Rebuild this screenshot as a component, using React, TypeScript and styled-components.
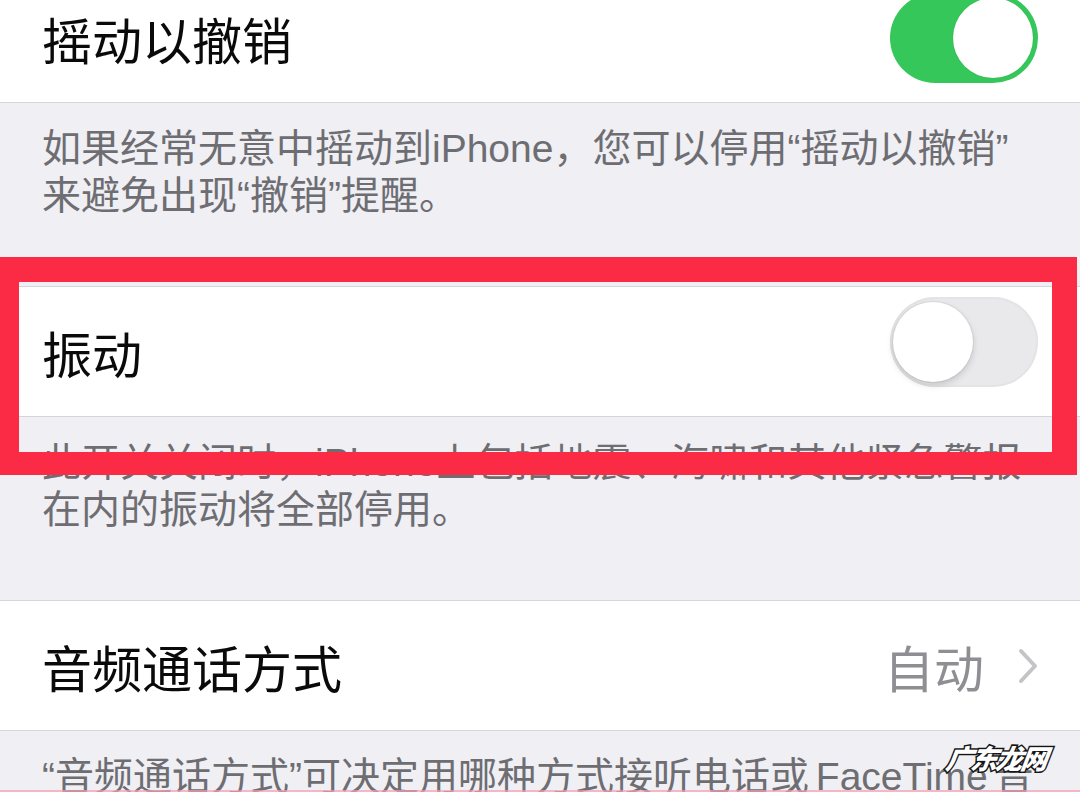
import React from "react";
import styled, { createGlobalStyle } from "styled-components";

const GlobalStyle = createGlobalStyle`
  html, body {
    margin: 0;
    padding: 0;
    background: #efeff4;
  }
  * { box-sizing: border-box; }
`;

const Page = styled.div`
  position: relative;
  width: 1080px;
  height: 792px;
  overflow: hidden;
  background: #efeff4;
  font-family: "Noto Sans CJK SC", sans-serif;
`;

const Group = styled.div<{ $first?: boolean }>`
  background: #ffffff;
  border-top: 1px solid #d6d6da;
  border-bottom: 1px solid #d6d6da;
  margin-top: ${(p) => (p.$first ? "-28px" : "0")};
`;

const Row = styled.div`
  height: 129px;
  display: flex;
  align-items: center;
  justify-content: space-between;
  padding: 0 42px;
`;

const Label = styled.span`
  font-size: 50px;
  line-height: 1.2;
  color: #0a0a0a;
  font-weight: 400;
`;

const Detail = styled.div`
  display: flex;
  align-items: center;
  gap: 34px;
`;

const Value = styled.span`
  font-size: 50px;
  line-height: 1.2;
  color: #8e8e93;
`;

const Footer = styled.p`
  margin: 0;
  height: 183px;
  padding: 22px 42px 0;
  font-family: "Liberation Sans", "Noto Sans CJK SC", sans-serif;
  font-size: 39px;
  line-height: 47px;
  color: #6d6d72;
  white-space: nowrap;
  word-spacing: -4px;
`;

const Track = styled.div<{ $on: boolean; $raise?: number }>`
  position: relative;
  width: 148px;
  height: 90px;
  border-radius: 45px;
  flex: none;
  background: ${(p) => (p.$on ? "#36c75a" : "#e9e9eb")};
  box-shadow: ${(p) => (p.$on ? "none" : "inset 0 0 0 2px #e4e4e7")};
  margin-bottom: ${(p) => (p.$raise ? `${p.$raise * 2}px` : "0")};
`;

const Knob = styled.div<{ $on: boolean }>`
  position: absolute;
  top: 5px;
  left: ${(p) => (p.$on ? "63px" : "3px")};
  width: 80px;
  height: 80px;
  border-radius: 50%;
  background: #ffffff;
  box-shadow: ${(p) =>
    p.$on
      ? "0 0 0 1px rgba(0,0,0,0.03)"
      : "0 3px 7px rgba(0,0,0,0.16), 0 0 0 1px rgba(0,0,0,0.05)"};
`;

const Highlight = styled.div`
  position: absolute;
  top: 257px;
  left: -6px;
  width: 1083px;
  height: 218px;
  border: 25px solid #fb2b45;
  border-bottom-width: 23px;
  pointer-events: none;
`;

const EdgeMark = styled.div`
  position: absolute;
  left: 0;
  right: 0;
  bottom: 0;
  height: 2px;
  background: rgba(248, 160, 178, 0.7);
`;

const Watermark = styled.div`
  position: absolute;
  right: 34px;
  bottom: 15px;
  font-family: "Noto Sans CJK SC", sans-serif;
  font-size: 27px;
  font-weight: 900;
  font-style: italic;
  color: #ffffff;
  letter-spacing: -2px;
  -webkit-text-stroke: 3px #151515;
  paint-order: stroke fill;
  transform: skewX(-8deg);
`;

function Switch({ on, raise }: { on: boolean; raise?: number }) {
  return (
    <Track $on={on} $raise={raise}>
      <Knob $on={on} />
    </Track>
  );
}

function Chevron() {
  return (
    <svg width="20" height="36" viewBox="0 0 20 36" fill="none">
      <path
        d="M3 3 L17 18 L3 33"
        stroke="#c4c4c8"
        strokeWidth="4"
        strokeLinecap="round"
        strokeLinejoin="round"
      />
    </svg>
  );
}

export default function App() {
  return (
    <>
      <GlobalStyle />
      <Page>
        <Group $first>
          <Row>
            <Label>摇动以撤销</Label>
            <Switch on />
          </Row>
        </Group>
        <Footer>
          如果经常无意中摇动到iPhone，您可以停用“摇动以撤销”
          <br />
          来避免出现“撤销”提醒。
        </Footer>

        <Group>
          <Row>
            <Label>振动</Label>
            <Switch on={false} raise={10} />
          </Row>
        </Group>
        <Footer>
          此开关关闭时，iPhone上包括地震、海啸和其他紧急警报
          <br />
          在内的振动将全部停用。
        </Footer>

        <Group>
          <Row>
            <Label>音频通话方式</Label>
            <Detail>
              <Value>自动</Value>
              <Chevron />
            </Detail>
          </Row>
        </Group>
        <Footer>
          “音频通话方式”可决定用哪种方式接听电话或 FaceTime 音
          <br />
          频通话。
        </Footer>

        <Highlight />
        <EdgeMark />
        <Watermark>广东龙网</Watermark>
      </Page>
    </>
  );
}
